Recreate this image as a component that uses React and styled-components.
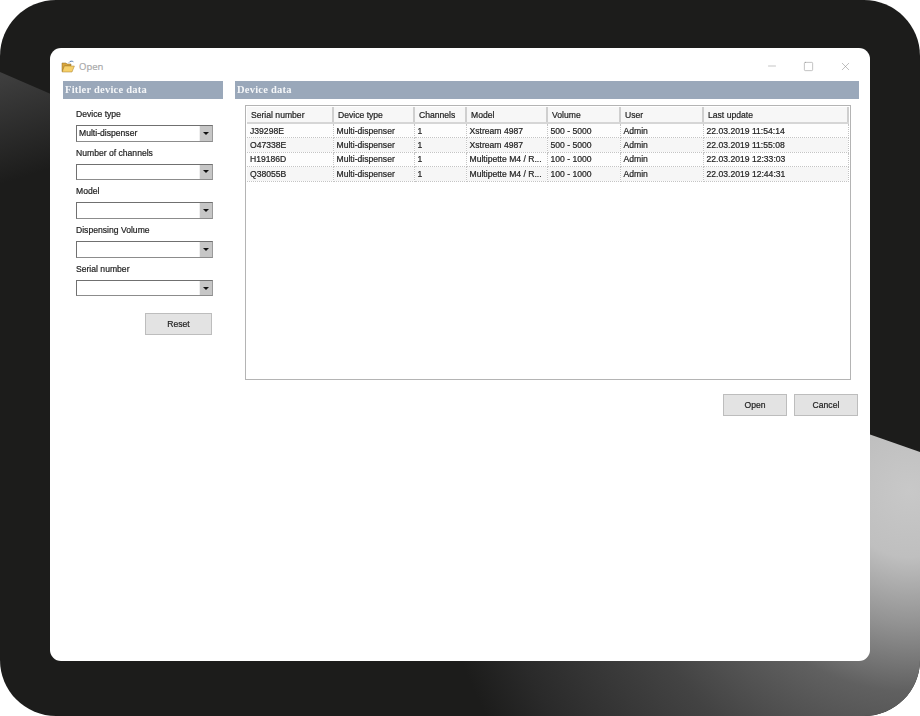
import React from 'react';
import styled, { createGlobalStyle } from "styled-components";
import { Minus, Square, X } from "lucide-react";

const GlobalStyle = createGlobalStyle`
    html, body {
        margin: 0;
        padding: 0;
        background: #ffffff;
    }
`

const Frame = styled.div`
    position: relative;
    box-sizing: border-box;
    width: 920px;
    height: 716px;
    padding: 48px 50px 55px;
    border-radius: 56px;
    overflow: hidden;
    background: #1c1c1b;
`

const Backdrop = styled.svg`
    position: absolute;
    inset: 0;
    width: 920px;
    height: 716px;
`

const Dialog = styled.div`
    position: relative;
    display: flex;
    flex-direction: column;
    height: 100%;
    border-radius: 11px;
    background: #ffffff;
    font-family: "Liberation Sans", Arial, sans-serif;
    font-size: 8.6px;
    color: #222222;
    -webkit-text-stroke: 0.2px currentColor;
    filter: blur(0.25px);
`

const TitleBar = styled.div`
    display: flex;
    align-items: center;
    flex: none;
    height: 33px;
    padding: 3px 18px 0 11px;
    box-sizing: border-box;
`

const Title = styled.span`
    margin-left: 4px;
    font-family: "Open Sans", sans-serif;
    font-size: 9.5px;
    color: #a9a9a9;
`

const WindowButtons = styled.div`
    display: flex;
    align-items: center;
    gap: 25px;
    margin-left: auto;
    color: #8a8a8a;
`

const Body = styled.div`
    display: flex;
    gap: 12px;
    padding: 0 11px 0 13px;
`

const Sidebar = styled.section`
    flex: none;
    width: 160px;
`

const Main = styled.section`
    flex: 1;
`

const PanelHeader = styled.h2`
    margin: 0;
    height: 18px;
    padding-left: 2px;
    background: #9aa8ba;
    font-family: "Liberation Serif", serif;
    font-size: 10.5px;
    font-weight: 700;
    letter-spacing: 0.22px;
    line-height: 18px;
    color: #f4f6f8;
    -webkit-text-stroke: 0;
`

const Filters = styled.div`
    display: flex;
    flex-direction: column;
    padding: 9px 10px 0 13px;
`

const Field = styled.div`
    display: flex;
    flex-direction: column;
    gap: 5px;
    margin-bottom: 5.2px;
`

const FieldLabel = styled.label`
    height: 12px;
    line-height: 12px;
`

const Combo = styled.div`
    display: flex;
    align-items: center;
    box-sizing: border-box;
    height: 16.5px;
    border: 1px solid #707070;
    border-right-color: #9a9a9a;
    border-bottom-color: #8c8c8c;
    background: #ffffff;
`

const ComboValue = styled.span`
    flex: 1;
    padding-left: 2px;
    color: #1c1c1c;
`

const ComboArrow = styled.span`
    display: flex;
    align-items: center;
    justify-content: center;
    align-self: stretch;
    width: 12px;
    border-left: 1px solid #f0f0f0;
    background: #c6c6c6;
    &::before {
        content: "";
        border-left: 3px solid transparent;
        border-right: 3px solid transparent;
        border-top: 3px solid #111111;
    }
`

const Button = styled.button`
    box-sizing: border-box;
    width: ${props => props.$width}px;
    height: 22px;
    padding: 0;
    border: 1px solid #bdbdbd;
    background: #e3e3e3;
    font-family: "Liberation Sans", Arial, sans-serif;
    font-size: 8.6px;
    color: #222222;
    -webkit-text-stroke: 0.2px currentColor;
`

const ResetRow = styled.div`
    display: flex;
    justify-content: flex-end;
    margin-top: 12px;
    padding-right: 1px;
`

const TableBox = styled.div`
    box-sizing: border-box;
    width: 606px;
    height: 274.5px;
    margin: 6px 0 0 10px;
    padding: 1px;
    border: 1px solid #b4b4b4;
`

const Table = styled.table`
    width: 601px;
    table-layout: fixed;
    border-collapse: collapse;
`

const HeadCell = styled.th`
    box-sizing: border-box;
    width: ${props => props.$width}px;
    height: 16px;
    padding: 0 0 0 4px;
    border-right: 2px solid #cfcfcf;
    border-bottom: 2px solid #d6d6d6;
    background: #f7f7f7;
    font-weight: 400;
    text-align: left;
    white-space: nowrap;
`

const Row = styled.tr`
    height: 14.6px;
    background: ${props => props.$shaded ? "#f6f6f6" : "#fdfdfd"};
`

const Cell = styled.td`
    box-sizing: border-box;
    padding: 0 0 0 3px;
    border-right: 1px dotted #c4c4c4;
    border-bottom: 1px dotted #c4c4c4;
    line-height: 12px;
    white-space: nowrap;
    overflow: hidden;
`

const Actions = styled.div`
    display: flex;
    justify-content: flex-end;
    gap: 7px;
    margin-top: 14.5px;
    padding-right: 1px;
`

const filters = [
    { label: "Device type", value: "Multi-dispenser" },
    { label: "Number of channels" },
    { label: "Model" },
    { label: "Dispensing Volume" },
    { label: "Serial number" },
];

const columns = [
    ["Serial number", 86],
    ["Device type", 81],
    ["Channels", 52],
    ["Model", 81],
    ["Volume", 73],
    ["User", 83],
    ["Last update", 145],
];

const rows = [
    ["J39298E", "Multi-dispenser", "1", "Xstream 4987", "500 - 5000", "Admin", "22.03.2019 11:54:14"],
    ["O47338E", "Multi-dispenser", "1", "Xstream 4987", "500 - 5000", "Admin", "22.03.2019 11:55:08"],
    ["H19186D", "Multi-dispenser", "1", "Multipette M4 / R...", "100 - 1000", "Admin", "22.03.2019 12:33:03"],
    ["Q38055B", "Multi-dispenser", "1", "Multipette M4 / R...", "100 - 1000", "Admin", "22.03.2019 12:44:31"],
];

function FolderIcon () {return (
    <svg width="14" height="13" viewBox="0 0 14 13">
        <path d="M1 3h4l1 1h4v2H3.5L1.5 11.5H1z" fill="#d9a53c" stroke="#8a6a25" strokeWidth="0.5"/>
        <path d="M3.4 6h10l-2.4 6H1.2z" fill="#f6d06a" stroke="#a57f2d" strokeWidth="0.5"/>
        <path d="M8 2.5C9 1 11 .7 12.4 1.8" fill="none" stroke="#5a7fb0" strokeWidth="1"/>
    </svg>
)}

function Background () {return (
    <Backdrop viewBox="0 0 920 716">
        <defs>
            <linearGradient id="leftWedge" gradientUnits="userSpaceOnUse" x1="0" y1="78" x2="30" y2="175">
                <stop offset="0" stopColor="#3e3e3e"/>
                <stop offset="1" stopColor="#1c1c1b"/>
            </linearGradient>
            <radialGradient id="rightWedge" gradientUnits="userSpaceOnUse" cx="910" cy="490" r="480">
                <stop offset="0" stopColor="#c8c8c8"/>
                <stop offset="0.14" stopColor="#bfbfbf"/>
                <stop offset="0.28" stopColor="#929292"/>
                <stop offset="0.42" stopColor="#606060"/>
                <stop offset="0.62" stopColor="#434343"/>
                <stop offset="0.88" stopColor="#2a2a2a"/>
                <stop offset="1" stopColor="#1c1c1b"/>
            </radialGradient>
        </defs>
        <path d="M0 72L60 98V240H0z" fill="url(#leftWedge)"/>
        <path d="M860 431L920 452V716H300z" fill="url(#rightWedge)"/>
    </Backdrop>
)}

export default function App () {return (
    <Frame>
        <GlobalStyle />
        <Background />
        <Dialog>
            <TitleBar>
                <FolderIcon />
                <Title>Open</Title>
                <WindowButtons>
                    <Minus size={12} strokeWidth={1} />
                    <Square size={11} strokeWidth={1.1} />
                    <X size={13} strokeWidth={1} />
                </WindowButtons>
            </TitleBar>
            <Body>
                <Sidebar>
                    <PanelHeader>Fitler device data</PanelHeader>
                    <Filters>
                        {filters.map(f => (
                            <Field key={f.label}>
                                <FieldLabel>{f.label}</FieldLabel>
                                <Combo>
                                    <ComboValue>{f.value}</ComboValue>
                                    <ComboArrow />
                                </Combo>
                            </Field>
                        ))}
                        <ResetRow><Button $width={67}>Reset</Button></ResetRow>
                    </Filters>
                </Sidebar>
                <Main>
                    <PanelHeader>Device data</PanelHeader>
                    <TableBox>
                        <Table>
                            <thead>
                                <tr>
                                    {columns.map(([name, width]) => (
                                        <HeadCell key={name} $width={width}>{name}</HeadCell>
                                    ))}
                                </tr>
                            </thead>
                            <tbody>
                                {rows.map((row, i) => (
                                    <Row key={row[0]} $shaded={i % 2 === 1}>
                                        {row.map((text, j) => <Cell key={j}>{text}</Cell>)}
                                    </Row>
                                ))}
                            </tbody>
                        </Table>
                    </TableBox>
                    <Actions>
                        <Button $width={64}>Open</Button>
                        <Button $width={64}>Cancel</Button>
                    </Actions>
                </Main>
            </Body>
        </Dialog>
    </Frame>
)};
